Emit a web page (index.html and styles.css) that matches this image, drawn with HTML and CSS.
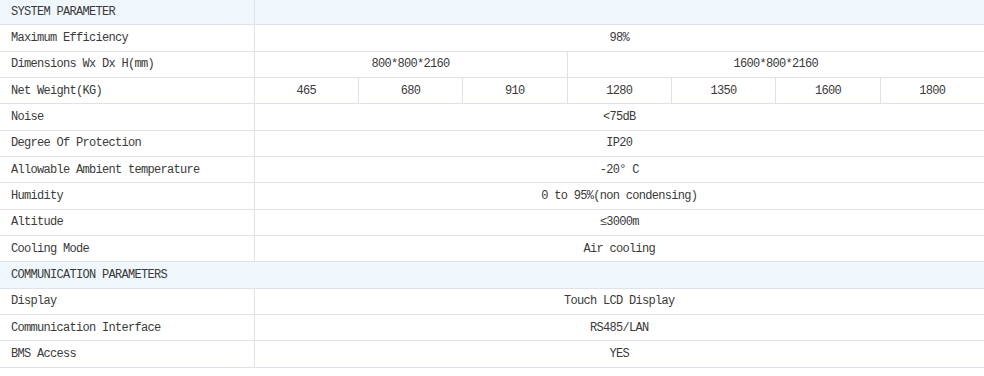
FILE: index.html
```html
<!DOCTYPE html>
<html>
<head>
<meta charset="utf-8">
<link rel="stylesheet" href="styles.css">
</head>
<body>
<table class="spec">
  <colgroup>
    <col class="col-label">
    <col><col><col><col><col><col><col>
  </colgroup>
  <tbody>
    <tr class="section"><td class="label">SYSTEM PARAMETER</td><td colspan="7"></td></tr>
    <tr><td class="label">Maximum Efficiency</td><td colspan="7">98%</td></tr>
    <tr><td class="label">Dimensions Wx Dx H(mm)</td><td colspan="3">800*800*2160</td><td colspan="4">1600*800*2160</td></tr>
    <tr><td class="label">Net Weight(KG)</td><td>465</td><td>680</td><td>910</td><td>1280</td><td>1350</td><td>1600</td><td>1800</td></tr>
    <tr><td class="label">Noise</td><td colspan="7">&lt;75dB</td></tr>
    <tr><td class="label">Degree Of Protection</td><td colspan="7">IP20</td></tr>
    <tr><td class="label">Allowable Ambient temperature</td><td colspan="7">-20° C</td></tr>
    <tr><td class="label">Humidity</td><td colspan="7">0 to 95%(non condensing)</td></tr>
    <tr><td class="label">Altitude</td><td colspan="7">≤3000m</td></tr>
    <tr><td class="label">Cooling Mode</td><td colspan="7">Air cooling</td></tr>
    <tr class="section"><td class="label" colspan="8">COMMUNICATION PARAMETERS</td></tr>
    <tr><td class="label">Display</td><td colspan="7">Touch LCD Display</td></tr>
    <tr><td class="label">Communication Interface</td><td colspan="7">RS485/LAN</td></tr>
    <tr><td class="label">BMS Access</td><td colspan="7">YES</td></tr>
  </tbody>
</table>
</body>
</html>
```

FILE: styles.css
```css
html, body {
  margin: 0;
  padding: 0;
  background: #ffffff;
}

.spec {
  width: 985px;
  margin-top: -2px;
  border-collapse: collapse;
  table-layout: fixed;
  font-family: "Liberation Mono", "DejaVu Sans Mono", monospace;
  font-size: 12px;
  letter-spacing: -0.7px;
  color: #3a3a3a;
}

.col-label {
  width: 254px;
}

.spec td {
  height: 26.33px;
  padding: 0;
  border: 1px solid #dde3e8;
  text-align: center;
  vertical-align: middle;
  white-space: nowrap;
  box-sizing: border-box;
}

.spec td:first-child {
  border-left: none;
}

.spec td.label {
  text-align: left;
  padding-left: 11px;
}

.section td {
  background: #f0f7fc;
}
```
